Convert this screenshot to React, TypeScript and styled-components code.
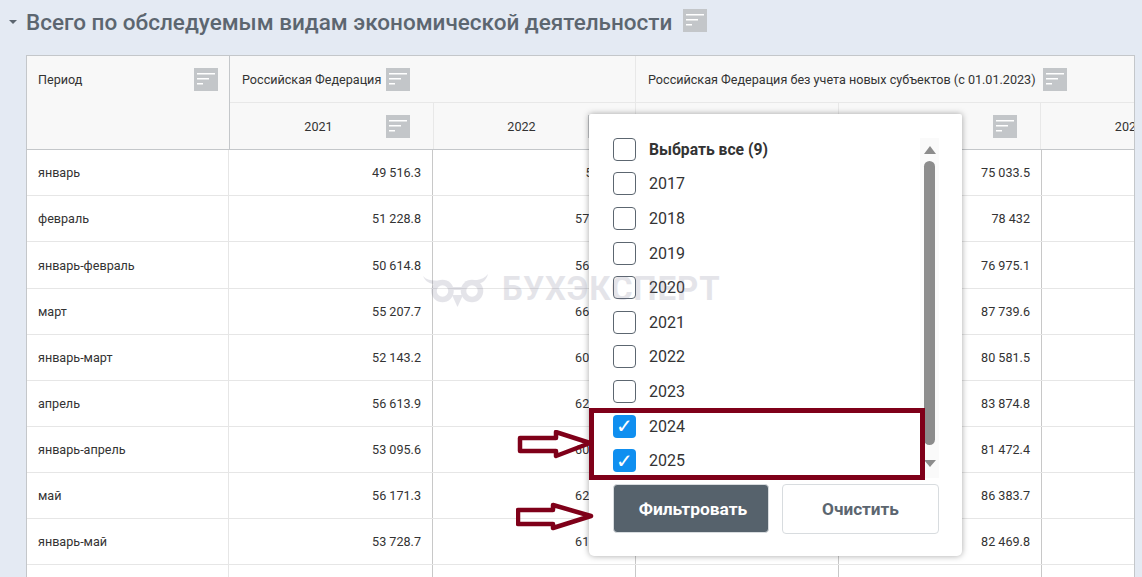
import React from 'react';
import styled, { createGlobalStyle } from 'styled-components';

interface RowData {
    period: string;
    first: string;
    second: string;
    fourth: string;
}

const rows: RowData[] = [
    { period: 'январь', first: '49 516.3', second: '54 895', fourth: '75 033.5' },
    { period: 'февраль', first: '51 228.8', second: '57 244.3', fourth: '78 432' },
    { period: 'январь-февраль', first: '50 614.8', second: '56 120.4', fourth: '76 975.1' },
    { period: 'март', first: '55 207.7', second: '66 318.2', fourth: '87 739.6' },
    { period: 'январь-март', first: '52 143.2', second: '60 402.7', fourth: '80 581.5' },
    { period: 'апрель', first: '56 613.9', second: '62 871.5', fourth: '83 874.8' },
    { period: 'январь-апрель', first: '53 095.6', second: '60 955.1', fourth: '81 472.4' },
    { period: 'май', first: '56 171.3', second: '62 530.6', fourth: '86 383.7' },
    { period: 'январь-май', first: '53 728.7', second: '61 276.9', fourth: '82 469.8' },
    { period: '', first: '', second: '', fourth: '' },
];

const years = [
    { label: 'Выбрать все (9)', checked: false, bold: true },
    { label: '2017', checked: false },
    { label: '2018', checked: false },
    { label: '2019', checked: false },
    { label: '2020', checked: false },
    { label: '2021', checked: false },
    { label: '2022', checked: false },
    { label: '2023', checked: false },
    { label: '2024', checked: true },
    { label: '2025', checked: true },
];

const headYears = ['2021', '2022', '2022', '2023', '2024'];

const FilterIcon = () => (
    <IconSvg viewBox="0 0 24 23">
        <rect width="24" height="23" fill="#c3c6c9" />
        <rect x="3" y="5" width="18" height="1.5" fill="#fff" />
        <rect x="3" y="10" width="12" height="1.5" fill="#fff" />
        <rect x="3" y="15" width="6" height="1.5" fill="#fff" />
    </IconSvg>
);

const App = () => {
    return (
        <Page>
            <GlobalStyle />
            <TitleRow>
                <Caret />
                <Title>Всего по обследуемым видам экономической деятельности</Title>
                <FilterIcon />
            </TitleRow>

            <Table>
                <Head>
                    <PeriodHead>
                        <span>Период</span>
                        <FilterIcon />
                    </PeriodHead>
                    <GroupHead $span={2} $gap={5}>
                        <span>Российская Федерация</span>
                        <FilterIcon />
                    </GroupHead>
                    <GroupHead $span={3} $gap={7}>
                        <span>Российская Федерация без учета новых субъектов (с 01.01.2023)</span>
                        <FilterIcon />
                    </GroupHead>
                    {headYears.map((year, index) => (
                        <YearHead key={index}>
                            <YearText>{year}</YearText>
                            <FilterIcon />
                        </YearHead>
                    ))}
                </Head>
                <Body>
                    {rows.map((row, index) => (
                        <BodyRow key={index}>
                            <PeriodCell>{row.period}</PeriodCell>
                            <ValueCell>{row.first}</ValueCell>
                            <ValueCell>{row.second}</ValueCell>
                            <ValueCell />
                            <ValueCell>{row.fourth}</ValueCell>
                            <ValueCell />
                        </BodyRow>
                    ))}
                </Body>
            </Table>

            <Popup>
                <ListArea>
                    <YearList>
                        {years.map((year) => (
                            <YearRow key={year.label}>
                                <Box $checked={year.checked}>{year.checked ? '✓' : ''}</Box>
                                <YearLabel $bold={year.bold}>{year.label}</YearLabel>
                            </YearRow>
                        ))}
                    </YearList>
                    <ScrollTrack>
                        <ArrowUp />
                        <Thumb />
                        <ArrowDown />
                    </ScrollTrack>
                </ListArea>
                <Buttons>
                    <FilterButton>Фильтровать</FilterButton>
                    <ClearButton>Очистить</ClearButton>
                </Buttons>
            </Popup>

            <Watermark>
                <svg width="68" height="38" viewBox="0 0 68 38">
                    <path d="M2 6 C8 13 18 9 29 12 L20 14 C11 15 5 13 2 6Z" fill="#6e6e8c" />
                    <path d="M67 4 C61 12 52 9 43 12 L53 14 C61 14 65 11 67 4Z" fill="#6e6e8c" />
                    <circle cx="21.5" cy="21" r="8.5" fill="none" stroke="#6e6e8c" strokeWidth="5.5" />
                    <circle cx="51" cy="21" r="8.5" fill="none" stroke="#6e6e8c" strokeWidth="5.5" />
                    <path d="M31 17 H42 V20 H31Z" fill="#6e6e8c" />
                    <path d="M31 25 L42 25 L36.5 37Z" fill="#6e6e8c" />
                </svg>
                <WatermarkText>БУХЭКСПЕРТ</WatermarkText>
            </Watermark>

            <Highlight />
            <Arrows viewBox="0 0 80 105" width="80" height="105">
                <path d="M4 8 H40 V2 L74 13 L40 26 V21 H4Z" />
                <path d="M2 80 H37 V75 L75 86 L37 98 V94 H2Z" />
            </Arrows>
        </Page>
    );
};

export default App;

const GlobalStyle = createGlobalStyle`
    html, body {
        margin: 0;
        padding: 0;
        height: 100%;
        overflow: hidden;
    }
    body {
        font-family: 'Roboto', 'Liberation Sans', sans-serif;
        background: #e4eaf3;
    }
    * {
        box-sizing: border-box;
    }
`;

const Page = styled.div`
    position: relative;
    width: 1142px;
    height: 577px;
    overflow: hidden;
    padding: 9px 7px 0 26px;
    background: #e4eaf3;
`;

const TitleRow = styled.div`
    position: relative;
    display: flex;
    align-items: center;
    gap: 11px;
    height: 23px;
    margin-bottom: 23px;
`;

const Caret = styled.span`
    position: absolute;
    left: -17px;
    top: 10.5px;
    width: 0;
    height: 0;
    border-left: 4px solid transparent;
    border-right: 4px solid transparent;
    border-top: 4px solid #5c6670;
`;

const Title = styled.h2`
    margin: 2px 0 0;
    font-size: 22.5px;
    font-weight: 500;
    line-height: 28px;
    color: #5c6670;
    white-space: nowrap;
`;

const IconSvg = styled.svg`
    display: block;
    flex: none;
    width: 24px;
    height: 23px;
`;

const Table = styled.div`
    width: 1109px;
    border: 1px solid #c4c7ca;
    border-bottom: 0;
    overflow: hidden;
    background: #fff;
    font-size: 12.6px;
    color: #333;
`;

const Head = styled.div`
    display: grid;
    grid-template-columns: 203px 204px 202px 203px 202px 203px;
    grid-template-rows: 47px 46px;
    width: 1217px;
    height: 94px;
    background: #f8f8f8;
    border-bottom: 1px solid #c4c7ca;
`;

const PeriodHead = styled.div`
    grid-row: span 2;
    display: flex;
    align-items: flex-start;
    justify-content: space-between;
    padding: 12px 11px 0 11px;
    border-right: 1px solid #c4c7ca;
    line-height: 23px;
`;

const GroupHead = styled.div<{ $span: number; $gap: number }>`
    grid-column: span ${(p) => p.$span};
    display: flex;
    align-items: center;
    gap: ${(p) => p.$gap}px;
    padding: 0 0 0 12px;
    border-right: 1px solid #e8e8e8;
    border-bottom: 1px solid #e8e8e8;
`;

const YearHead = styled.div`
    display: flex;
    align-items: center;
    justify-content: space-between;
    padding: 0 23px 0 21px;
    border-right: 1px solid #e8e8e8;
`;

const YearText = styled.span`
    flex: 1;
    text-align: center;
`;

const Body = styled.div`
    width: 1218px;
    padding-top: 0.3px;
`;

const BodyRow = styled.div`
    display: grid;
    grid-template-columns: 202px 204px 203px 203px 203px 203px;
    height: 46.1px;
    border-bottom: 1px solid #e6e6e6;
`;

const PeriodCell = styled.div`
    display: flex;
    align-items: center;
    padding-left: 11px;
    border-right: 1px solid #e6e6e6;
`;

const ValueCell = styled.div`
    display: flex;
    align-items: center;
    justify-content: flex-end;
    padding-right: 11px;
    border-right: 1px solid #c8c8c8;
`;

const Popup = styled.div`
    position: absolute;
    left: 589px;
    top: 114px;
    width: 373px;
    height: 442px;
    padding: 18px 23px 0 24px;
    background: #fff;
    border-radius: 2px 2px 5px 5px;
    box-shadow: 0 0 6px rgba(0, 0, 0, 0.35);
`;

const ListArea = styled.div`
    display: flex;
    justify-content: space-between;
    height: 346px;
`;

const YearList = styled.div`
    display: flex;
    flex-direction: column;
`;

const YearRow = styled.div`
    display: flex;
    align-items: center;
    gap: 13px;
    height: 34.6px;
`;

const Box = styled.span<{ $checked?: boolean }>`
    display: flex;
    align-items: center;
    justify-content: center;
    width: 23px;
    height: 23px;
    border-radius: 4px;
    border: ${(p) => (p.$checked ? '0' : '1.5px solid #5c6670')};
    background: ${(p) => (p.$checked ? '#0f8ff0' : '#fff')};
    color: #fff;
    font-family: 'DejaVu Sans', sans-serif;
    font-size: 20px;
    line-height: 1;
`;

const YearLabel = styled.span<{ $bold?: boolean }>`
    font-size: ${(p) => (p.$bold ? '15.7px' : '16px')};
    font-weight: ${(p) => (p.$bold ? 700 : 400)};
    color: #333;
`;

const ScrollTrack = styled.div`
    display: flex;
    flex-direction: column;
    align-items: center;
    width: 19px;
    margin-top: 6px;
    background: #fafafa;
`;

const ArrowUp = styled.span`
    margin-top: 8px;
    border-left: 6.5px solid transparent;
    border-right: 6.5px solid transparent;
    border-bottom: 8px solid #8c8c8c;
`;

const ArrowDown = styled.span`
    margin-top: 15px;
    border-left: 6.5px solid transparent;
    border-right: 6.5px solid transparent;
    border-top: 7px solid #8c8c8c;
`;

const Thumb = styled.span`
    width: 11px;
    height: 284px;
    margin-top: 7px;
    border-radius: 6px;
    background: #8c8c8c;
`;

const Buttons = styled.div`
    display: flex;
    justify-content: space-between;
    margin-top: 6px;
`;

const FilterButton = styled.button`
    width: 156px;
    height: 49px;
    padding: 0 0 0 4px;
    border: 1px solid #d8dcdf;
    border-radius: 4px;
    background: #56626c;
    color: #fff;
    font-family: inherit;
    font-size: 17.4px;
    font-weight: 700;
`;

const ClearButton = styled.button`
    width: 157px;
    height: 50px;
    border: 1px solid #d8dcdf;
    border-radius: 4px;
    background: #fff;
    color: #5c6670;
    font-family: inherit;
    font-size: 17.2px;
    font-weight: 700;
`;

const Watermark = styled.div`
    position: absolute;
    left: 421px;
    top: 269px;
    display: flex;
    align-items: center;
    gap: 13px;
    opacity: 0.18;
    pointer-events: none;
`;

const WatermarkText = styled.span`
    font-size: 33px;
    font-weight: 700;
    letter-spacing: 0.9px;
    color: #6e6e8c;
`;

const Highlight = styled.div`
    position: absolute;
    left: 589px;
    top: 408px;
    width: 336px;
    height: 72px;
    border: 5px solid #7f0019;
`;

const Arrows = styled.svg`
    position: absolute;
    left: 516px;
    top: 430px;
    fill: none;
    stroke: #7f0019;
    stroke-width: 4.5;
    stroke-linejoin: round;
`;
